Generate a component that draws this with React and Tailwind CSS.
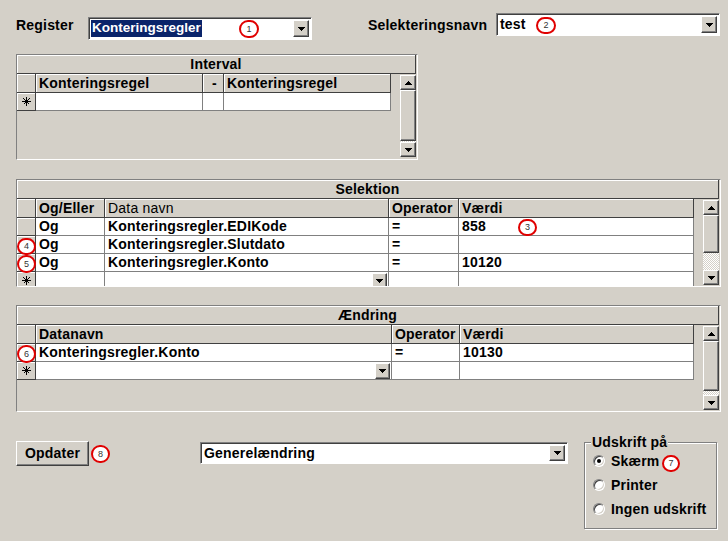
import React from 'react';

const raised =
  "bg-[#d4d0c8] border border-t-white border-l-white border-r-[#404040] border-b-[#404040] shadow-[inset_-1px_-1px_#808080]";

function Tri({ up }) {
  return up ? (
    <svg width="7" height="4" viewBox="0 0 7 4" shapeRendering="crispEdges">
      <rect x="3" y="0" width="1" height="1" fill="#000" />
      <rect x="2" y="1" width="3" height="1" fill="#000" />
      <rect x="1" y="2" width="5" height="1" fill="#000" />
      <rect x="0" y="3" width="7" height="1" fill="#000" />
    </svg>
  ) : (
    <svg width="7" height="4" viewBox="0 0 7 4" shapeRendering="crispEdges">
      <rect x="0" y="0" width="7" height="1" fill="#000" />
      <rect x="1" y="1" width="5" height="1" fill="#000" />
      <rect x="2" y="2" width="3" height="1" fill="#000" />
      <rect x="3" y="3" width="1" height="1" fill="#000" />
    </svg>
  );
}

function Star() {
  return (
    <svg width="9" height="9" viewBox="0 0 9 9" shapeRendering="crispEdges">
      <path d="M4.5 0V9M0 4.5H9M1.5 1.5L7.5 7.5M7.5 1.5L1.5 7.5" stroke="#000" strokeWidth="1" fill="none" />
    </svg>
  );
}

function Combo({ className, children }) {
  return (
    <div
      className={`bg-white border border-t-[#808080] border-l-[#808080] border-r-white border-b-white shadow-[inset_1px_1px_#404040] flex items-stretch p-[2px] ${className}`}
    >
      <div className="flex-1 min-w-0 flex items-center">{children}</div>
      <div className={`${raised} w-[16px] shrink-0 flex items-center justify-center`}>
        <Tri />
      </div>
    </div>
  );
}

function ScrollBar({ thumb, className }) {
  return (
    <div className={`w-[16px] shrink-0 flex flex-col ${className}`}>
      <div className={`${raised} h-[15px] shrink-0 flex items-center justify-center`}>
        <Tri up />
      </div>
      <div className={`${raised} shrink-0 ${thumb}`} />
      <div className="flex-1 bg-[image:repeating-conic-gradient(#fff_0_25%,#d4d0c8_0_50%)] bg-[length:2px_2px]" />
      <div className={`${raised} h-[15px] shrink-0 flex items-center justify-center`}>
        <Tri />
      </div>
    </div>
  );
}

function Panel({ className, title, children }) {
  return (
    <div
      className={`border border-t-[#808080] border-l-[#808080] border-r-white border-b-white flex flex-col ${className}`}
    >
      <div className="h-[19px] shrink-0 mr-[1px] border-r border-b border-[#404040] shadow-[inset_1px_1px_#fff] flex items-center justify-center text-[14px] font-bold tracking-[0.2px]">
        {title}
      </div>
      <div className="flex-1 min-h-0 flex overflow-hidden">{children}</div>
    </div>
  );
}

const hdrBold =
  "h-full shrink-0 bg-[#d4d0c8] border-r border-b border-[#404040] shadow-[inset_1px_1px_#fff] pl-[3px] flex items-center text-[14px] font-bold tracking-[0.2px] whitespace-nowrap overflow-hidden";
const hdrNormal =
  "h-full shrink-0 bg-[#d4d0c8] border-r border-b border-[#404040] shadow-[inset_1px_1px_#fff] pl-[3px] flex items-center text-[14px] font-normal tracking-[0.2px] whitespace-nowrap overflow-hidden";
const cellCls =
  "h-full shrink-0 bg-white border-r border-b border-[#808080] pl-[3px] flex items-center text-[14px] tracking-[0.2px] font-bold whitespace-nowrap overflow-hidden";

function Sel({ children }) {
  return (
    <div className="w-[19px] h-full shrink-0 bg-[#d4d0c8] border-r border-b border-[#404040] shadow-[inset_1px_1px_#fff] flex items-center justify-center">
      {children}
    </div>
  );
}

function H({ className, bold = true, children }) {
  return <div className={`${bold ? hdrBold : hdrNormal} ${className}`}>{children}</div>;
}

function C({ className, children }) {
  return <div className={`${cellCls} ${className}`}>{children}</div>;
}

function RowDrop() {
  return (
    <div className={`${raised} ml-auto mr-[1px] w-[15px] h-[16px] shrink-0 flex items-center justify-center`}>
      <Tri />
    </div>
  );
}

function Radio({ checked }) {
  return (
    <div className="w-[12px] h-[12px] shrink-0 rounded-full bg-white border border-t-[#808080] border-l-[#808080] border-r-white border-b-white shadow-[inset_1px_1px_#404040,inset_-1px_-1px_#d4d0c8] flex items-center justify-center">
      {checked && <div className="w-[4px] h-[4px] rounded-full bg-black" />}
    </div>
  );
}

function Ann({ className, n }) {
  return (
    <div
      className={`absolute rounded-full border-2 border-[#e00000] bg-white flex items-center justify-center text-[9px] leading-none font-normal text-[#333] ${className}`}
    >
      {n}
    </div>
  );
}

export default function App() {
  return (
    <div className="relative w-[728px] h-[541px] overflow-hidden bg-[#d4d0c8] text-black font-['Liberation_Sans',Arial,sans-serif] font-bold">
      {/* Top row */}
      <div className="flex items-start h-[54px]">
        <div className="ml-[16px] mt-[17px] w-[72px] text-[14px] leading-[16px] tracking-[0.2px]">Register</div>
        <Combo className="mt-[17px] w-[224px] h-[23px]">
          <span className="h-full flex items-center bg-[#0a246a] text-white px-[1px] text-[13.5px]">Konteringsregler</span>
        </Combo>
        <div className="ml-[56px] mt-[17px] w-[128px] text-[14px] leading-[16px] tracking-[0.2px]">Selekteringsnavn</div>
        <Combo className="mt-[13px] w-[224px] h-[23px]">
          <span className="pl-[1px] text-[14px] tracking-[0.2px]">test</span>
        </Combo>
      </div>

      {/* Interval */}
      <Panel className="ml-[16px] w-[402px] h-[106px]" title="Interval">
        <div className="w-[374px] shrink-0 flex flex-col">
          <div className="flex h-[19px]">
            <Sel />
            <H className="w-[167px]">Konteringsregel</H>
            <H className="w-[21px] justify-center pl-0">-</H>
            <H className="w-[167px]">Konteringsregel</H>
          </div>
          <div className="flex h-[18px]">
            <Sel>
              <Star />
            </Sel>
            <C className="w-[167px]" />
            <C className="w-[21px]" />
            <C className="w-[167px]" />
          </div>
        </div>
        <div className="w-[9px] shrink-0" />
        <ScrollBar thumb="h-[51px]" className="mt-[1px] mb-[2px]" />
      </Panel>

      {/* Selektion */}
      <Panel className="ml-[16px] mt-[19px] w-[705px] h-[108px]" title="Selektion">
        <div className="w-[677px] shrink-0 flex flex-col">
          <div className="flex h-[19px] shrink-0">
            <Sel />
            <H className="w-[69px]">Og/Eller</H>
            <H className="w-[284px]" bold={false}>Data navn</H>
            <H className="w-[70px]">Operator</H>
            <H className="w-[235px]">Værdi</H>
          </div>
          <div className="flex h-[18px] shrink-0">
            <Sel />
            <C className="w-[69px]">Og</C>
            <C className="w-[284px]">Konteringsregler.EDIKode</C>
            <C className="w-[70px]">=</C>
            <C className="w-[235px]">858</C>
          </div>
          <div className="flex h-[18px] shrink-0">
            <Sel />
            <C className="w-[69px]">Og</C>
            <C className="w-[284px]">Konteringsregler.Slutdato</C>
            <C className="w-[70px]">=</C>
            <C className="w-[235px]" />
          </div>
          <div className="flex h-[18px] shrink-0">
            <Sel />
            <C className="w-[69px]">Og</C>
            <C className="w-[284px]">Konteringsregler.Konto</C>
            <C className="w-[70px]">=</C>
            <C className="w-[235px]">10120</C>
          </div>
          <div className="flex h-[18px] shrink-0">
            <Sel>
              <Star />
            </Sel>
            <C className="w-[69px]" />
            <C className="w-[284px]">
              <RowDrop />
            </C>
            <C className="w-[70px]" />
            <C className="w-[235px]" />
          </div>
        </div>
        <div className="w-[9px] shrink-0" />
        <ScrollBar thumb="h-[38px]" className="mt-[1px] mb-[1px]" />
      </Panel>

      {/* Ændring */}
      <Panel className="ml-[16px] mt-[18px] w-[705px] h-[107px]" title="Ændring">
        <div className="w-[677px] shrink-0 flex flex-col">
          <div className="flex h-[19px] shrink-0">
            <Sel />
            <H className="w-[356px]">Datanavn</H>
            <H className="w-[68px]">Operator</H>
            <H className="w-[234px]">Værdi</H>
          </div>
          <div className="flex h-[18px] shrink-0">
            <Sel />
            <C className="w-[356px]">Konteringsregler.Konto</C>
            <C className="w-[68px]">=</C>
            <C className="w-[234px]">10130</C>
          </div>
          <div className="flex h-[18px] shrink-0">
            <Sel>
              <Star />
            </Sel>
            <C className="w-[356px]">
              <RowDrop />
            </C>
            <C className="w-[68px]" />
            <C className="w-[234px]" />
          </div>
        </div>
        <div className="w-[9px] shrink-0" />
        <ScrollBar thumb="h-[50px]" className="mt-[1px] mb-[1px]" />
      </Panel>

      {/* Bottom row */}
      <div className="flex items-start">
        <button
          className={`${raised} ml-[16px] mt-[29px] w-[73px] h-[25px] flex items-center justify-center text-[14px] font-bold tracking-[0.2px]`}
        >
          Opdater
        </button>
        <Combo className="ml-[111px] mt-[30px] w-[368px] h-[22px]">
          <span className="pl-[1px] text-[14px] tracking-[0.2px]">Generelændring</span>
        </Combo>
        <fieldset className="ml-[16px] mt-[22px] w-[133px] border border-[#808080] shadow-[inset_1px_1px_#fff,1px_1px_0_#fff] px-[8px] pt-[3px] pb-[11px] m-0">
          <legend className="ml-[-2px] px-[1px] bg-[#d4d0c8] text-[14px] leading-[16px] tracking-[0.2px]">Udskrift på</legend>
          <div className="flex flex-col gap-[8px]">
            <label className="flex items-center gap-[6px] h-[16px] text-[14px] leading-[16px] tracking-[0.2px]">
              <Radio checked />
              Skærm
            </label>
            <label className="flex items-center gap-[6px] h-[16px] text-[14px] leading-[16px] tracking-[0.2px]">
              <Radio />
              Printer
            </label>
            <label className="flex items-center gap-[6px] h-[16px] text-[14px] leading-[16px] tracking-[0.2px] whitespace-nowrap">
              <Radio />
              Ingen udskrift
            </label>
          </div>
        </fieldset>
      </div>

      {/* Annotations */}
      <Ann className="left-[239px] top-[20px] w-[20px] h-[18px]" n="1" />
      <Ann className="left-[536px] top-[17px] w-[20px] h-[17px]" n="2" />
      <Ann className="left-[518px] top-[219px] w-[19px] h-[17px]" n="3" />
      <Ann className="left-[17px] top-[238px] w-[19px] h-[17px]" n="4" />
      <Ann className="left-[17px] top-[255px] w-[19px] h-[18px]" n="5" />
      <Ann className="left-[17px] top-[345px] w-[19px] h-[18px]" n="6" />
      <Ann className="left-[662px] top-[455px] w-[18px] h-[17px]" n="7" />
      <Ann className="left-[91px] top-[445px] w-[19px] h-[18px]" n="8" />
    </div>
  );
}
